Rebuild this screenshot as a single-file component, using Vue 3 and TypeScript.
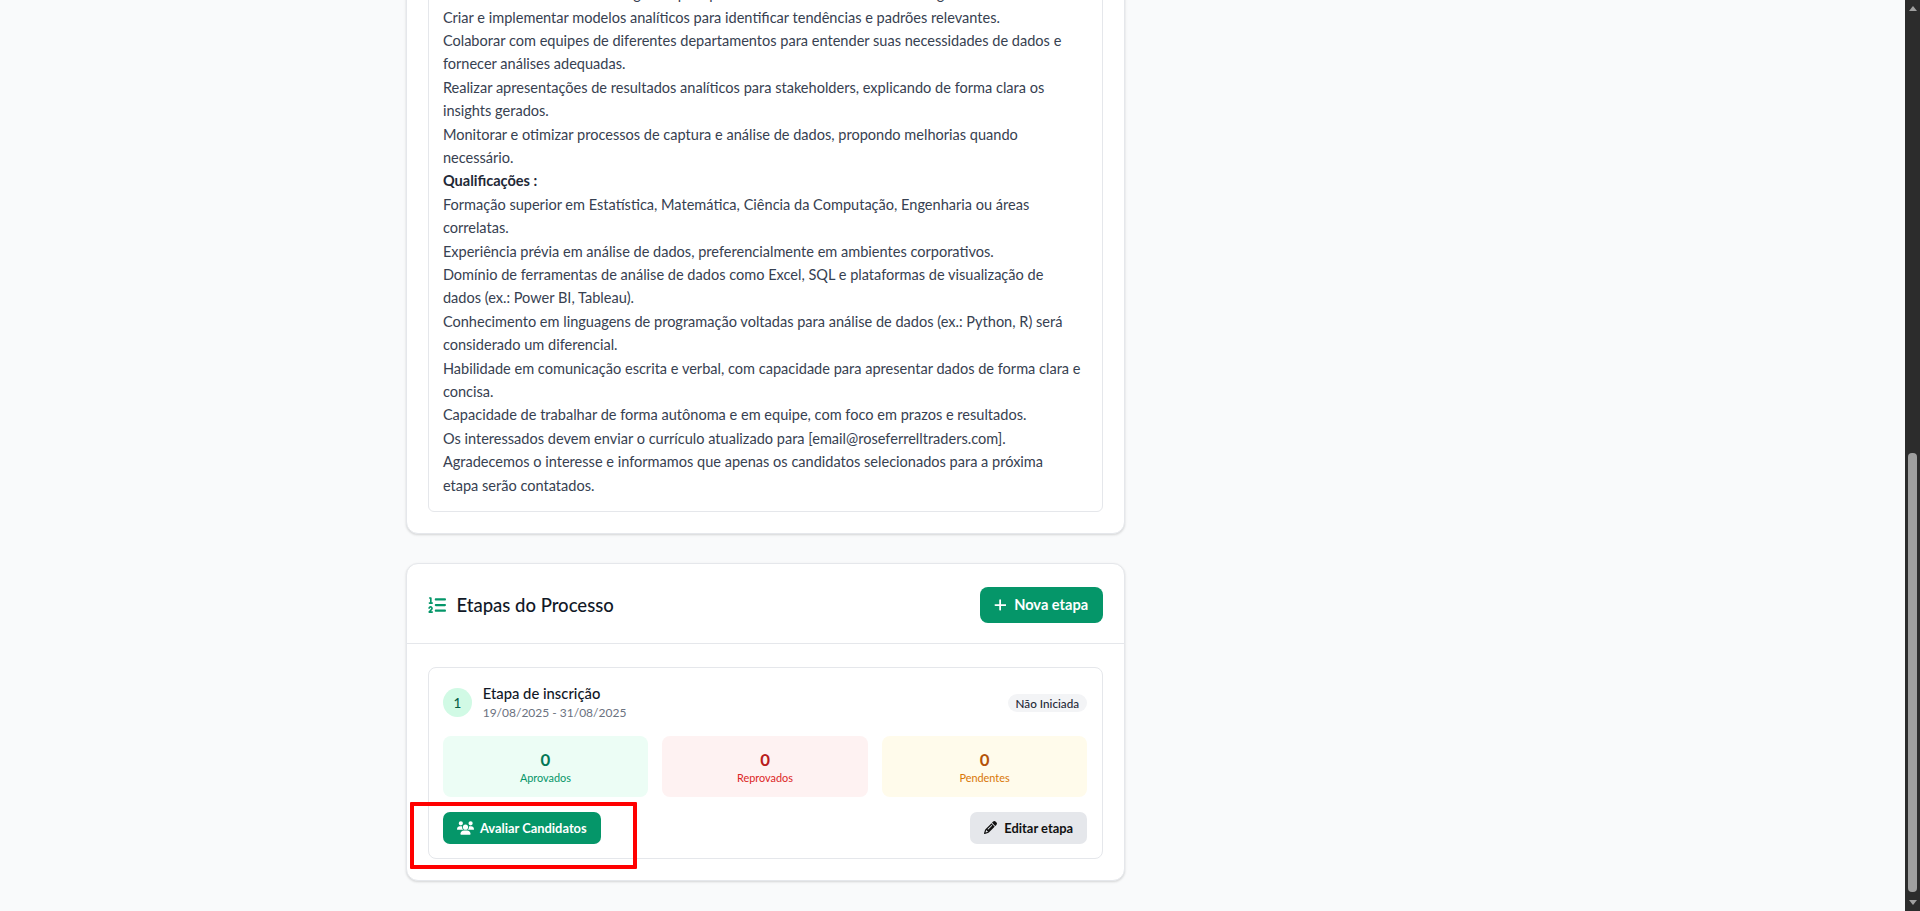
<script setup lang="ts">
interface Stat {
  value: number
  label: string
  kind: string
}

// \n keeps the two long lines breaking where the original does
const lines: { text: string; bold?: boolean }[] = [
  { text: 'Coletar e analisar dados de negócios para produzir relatórios e dashboards de gestão.' },
  { text: 'Criar e implementar modelos analíticos para identificar tendências e padrões relevantes.' },
  { text: 'Colaborar com equipes de diferentes departamentos para entender suas necessidades de dados e fornecer análises adequadas.' },
  { text: 'Realizar apresentações de resultados analíticos para stakeholders, explicando de forma clara os insights gerados.' },
  { text: 'Monitorar e otimizar processos de captura e análise de dados, propondo melhorias quando necessário.' },
  { text: 'Qualificações :', bold: true },
  { text: 'Formação superior em Estatística, Matemática, Ciência da Computação, Engenharia ou áreas correlatas.' },
  { text: 'Experiência prévia em análise de dados, preferencialmente em ambientes corporativos.' },
  { text: 'Domínio de ferramentas de análise de dados como Excel, SQL e plataformas de visualização de\ndados (ex.: Power BI, Tableau).' },
  { text: 'Conhecimento em linguagens de programação voltadas para análise de dados (ex.: Python, R) será considerado um diferencial.' },
  { text: 'Habilidade em comunicação escrita e verbal, com capacidade para apresentar dados de forma clara e concisa.' },
  { text: 'Capacidade de trabalhar de forma autônoma e em equipe, com foco em prazos e resultados.' },
  { text: 'Os interessados devem enviar o currículo atualizado para [email@roseferrelltraders.com].' },
  { text: 'Agradecemos o interesse e informamos que apenas os candidatos selecionados para a próxima\netapa serão contatados.' },
]

const stats: Stat[] = [
  { value: 0, label: 'Aprovados', kind: 'green' },
  { value: 0, label: 'Reprovados', kind: 'red' },
  { value: 0, label: 'Pendentes', kind: 'yellow' },
]
</script>

<template>
  <div class="page">
    <main class="content">
      <section class="card description-card">
        <div class="description">
          <div v-for="line in lines" :key="line.text" :class="{ bold: line.bold }">{{ line.text }}</div>
        </div>
      </section>

      <section class="card">
        <header class="card-header">
          <h2 class="card-title">
            <svg class="title-icon" viewBox="0 0 512 512" fill="currentColor">
              <path d="M24 56c0-13.3 10.7-24 24-24H80c13.3 0 24 10.7 24 24V176h16c13.3 0 24 10.7 24 24s-10.7 24-24 24H40c-13.3 0-24-10.7-24-24s10.7-24 24-24H56V80H48C34.7 80 24 69.3 24 56zM86.7 341.2c-6.5-7.4-18.3-6.9-24 1.2L51.5 357.9c-7.7 10.8-22.7 13.3-33.5 5.6s-13.3-22.7-5.6-33.5l11.1-15.6c23.7-33.2 72.3-35.6 99.2-4.9c21.3 24.4 20.8 60.9-1.1 84.7L86.8 432H120c13.3 0 24 10.7 24 24s-10.7 24-24 24H32c-9.5 0-18.2-5.6-22-14.4s-2.1-18.9 4.3-25.9l72-78c5.3-5.8 5.4-14.6 .3-20.5zM224 64H480c17.7 0 32 14.3 32 32s-14.3 32-32 32H224c-17.7 0-32-14.3-32-32s14.3-32 32-32zm0 160H480c17.7 0 32 14.3 32 32s-14.3 32-32 32H224c-17.7 0-32-14.3-32-32s14.3-32 32-32zm0 160H480c17.7 0 32 14.3 32 32s-14.3 32-32 32H224c-17.7 0-32-14.3-32-32s14.3-32 32-32z" />
            </svg>
            Etapas do Processo
          </h2>
          <button class="btn btn-new">
            <svg class="plus-icon" viewBox="0 0 448 512" fill="currentColor">
              <path d="M256 80c0-17.7-14.3-32-32-32s-32 14.3-32 32V224H48c-17.7 0-32 14.3-32 32s14.3 32 32 32H192V432c0 17.7 14.3 32 32 32s32-14.3 32-32V288H432c17.7 0 32-14.3 32-32s-14.3-32-32-32H256V80z" />
            </svg>
            Nova etapa
          </button>
        </header>

        <div class="card-body">
          <article class="stage">
            <div class="stage-top">
              <div class="stage-info">
                <span class="stage-number">1</span>
                <div class="stage-text">
                  <div class="stage-name">Etapa de inscrição</div>
                  <div class="stage-dates">19/08/2025 - 31/08/2025</div>
                </div>
              </div>
              <span class="badge">Não Iniciada</span>
            </div>

            <div class="stats">
              <div v-for="stat in stats" :key="stat.label" class="stat" :class="stat.kind">
                <div class="stat-value">{{ stat.value }}</div>
                <div class="stat-label">{{ stat.label }}</div>
              </div>
            </div>

            <div class="stage-actions">
              <button class="btn btn-evaluate">
                <svg class="users-icon" viewBox="0 0 640 512" fill="currentColor">
                  <path d="M144 0a80 80 0 1 1 0 160A80 80 0 1 1 144 0zM512 0a80 80 0 1 1 0 160A80 80 0 1 1 512 0zM0 298.7C0 239.8 47.8 192 106.7 192h42.7c15.9 0 31 3.5 44.6 9.7c-1.3 7.2-1.9 14.7-1.9 22.3c0 38.2 16.8 72.5 43.3 96c-.2 0-.4 0-.7 0H21.3C9.6 320 0 310.4 0 298.7zM405.3 320c-.2 0-.4 0-.7 0c26.6-23.5 43.3-57.8 43.3-96c0-7.6-.7-15-1.9-22.3c13.6-6.3 28.7-9.7 44.6-9.7h42.7C592.2 192 640 239.8 640 298.7c0 11.8-9.6 21.3-21.3 21.3H405.3zM224 224a96 96 0 1 1 192 0 96 96 0 1 1 -192 0zM128 485.3C128 411.7 187.7 352 261.3 352H378.7C452.3 352 512 411.7 512 485.3c0 14.7-11.9 26.7-26.7 26.7H154.7c-14.7 0-26.7-11.9-26.7-26.7z" />
                </svg>
                Avaliar Candidatos
              </button>
              <button class="btn btn-edit">
                <svg class="pencil-icon" viewBox="0 0 512 512" fill="currentColor">
                  <path d="M410.3 231l11.3-11.3-33.9-33.9-62.1-62.1L291.7 89.8l-11.3 11.3-22.6 22.6L58.6 322.9c-10.4 10.4-18 23.3-22.2 37.4L1 480.7c-2.5 8.4-.2 17.5 6.1 23.7s15.3 8.5 23.7 6.1l120.3-35.4c14.1-4.2 27-11.8 37.4-22.2L387.7 253.7 410.3 231zM160 399.4l-9.1 22.7c-4 3.1-8.5 5.4-13.3 6.9L59.4 452l23-78.1c1.4-4.9 3.8-9.4 6.9-13.3l22.7-9.1v32c0 8.8 7.2 16 16 16h32zM362.7 18.7L348.3 33.2 325.7 55.8 314.3 67.1l33.9 33.9 62.1 62.1 33.9 33.9 11.3-11.3 22.6-22.6 14.5-14.5c25-25 25-65.5 0-90.5L453.3 18.7c-25-25-65.5-25-90.5 0zm-47.4 168l-144 144c-6.2 6.2-16.4 6.2-22.6 0s-6.2-16.4 0-22.6l144-144c6.2-6.2 16.4-6.2 22.6 0s6.2 16.4 0 22.6z" />
                </svg>
                Editar etapa
              </button>
            </div>
          </article>
        </div>
      </section>
    </main>

    <aside class="scrollbar">
      <span class="arrow up"></span>
      <span class="scroll-space"></span>
      <span class="thumb"></span>
      <span class="arrow down"></span>
    </aside>

    <div class="highlight"></div>
  </div>
</template>

<style scoped>
.page {
  position: relative;
  display: flex;
  height: 911px;
  overflow: hidden;
  background: #f9fafb;
  font-family: Lato, "Noto Sans", sans-serif;
  color: #374151;
}

.content {
  flex: 1;
  display: flex;
  flex-direction: column;
  justify-content: flex-end;
  gap: 28.8px;
  padding: 0 0 30px 405.5px;
}

.card {
  width: 719px;
  flex-shrink: 0;
  box-sizing: border-box;
  background: #fff;
  border: 1px solid #e5e7eb;
  border-radius: 12px;
  box-shadow: 0 1px 3px rgba(0, 0, 0, 0.1), 0 1px 2px rgba(0, 0, 0, 0.06);
}

.description-card {
  padding: 21px;
}

.description {
  padding: 15.4px 14.4px 14.4px;
  border: 1px solid #e5e7eb;
  border-radius: 6px;
  font-size: 14.55px;
  line-height: 23.4px;
  white-space: pre-line;
}

.bold {
  font-weight: 700;
  color: #1f2937;
}

.card-header {
  display: flex;
  align-items: center;
  justify-content: space-between;
  height: 77px;
  padding: 2px 21px 0;
  border-bottom: 1px solid #e5e7eb;
}

.card-title {
  display: flex;
  align-items: center;
  gap: 11px;
  margin: 0;
  font-size: 18.5px;
  font-weight: 500;
  color: #111827;
}

.title-icon {
  width: 18px;
  height: 18px;
  color: #059669;
}

.btn {
  display: inline-flex;
  align-items: center;
  border: none;
  font-family: inherit;
  font-weight: 700;
  cursor: pointer;
}

.btn-new {
  gap: 8px;
  height: 36px;
  padding: 0 14.4px;
  border-radius: 8px;
  background: #059669;
  color: #fff;
  font-size: 14.6px;
}

.plus-icon {
  width: 12.25px;
  height: 14px;
}

.card-body {
  padding: 22.4px 21px 21px;
}

.stage {
  padding: 14.4px;
  border: 1px solid #e5e7eb;
  border-radius: 8px;
}

.stage-top {
  display: flex;
  align-items: center;
  justify-content: space-between;
}

.stage-info {
  display: flex;
  align-items: center;
  gap: 11px;
}

.stage-text {
  padding-top: 1px;
}

.stage-number {
  display: flex;
  align-items: center;
  justify-content: center;
  width: 28.8px;
  height: 28.8px;
  border-radius: 50%;
  background: #d1fae5;
  color: #065f46;
  font-size: 13.4px;
  font-weight: 500;
}

.stage-name {
  font-size: 14.8px;
  line-height: 20px;
  font-weight: 500;
  color: #111827;
}

.stage-dates {
  font-size: 12px;
  line-height: 20px;
  color: #6b7280;
}

.badge {
  padding: 0 8px;
  height: 18px;
  line-height: 18px;
  border-radius: 9px;
  background: #f3f4f6;
  color: #1f2937;
  font-size: 11.7px;
  font-weight: 500;
}

.stats {
  display: grid;
  grid-template-columns: repeat(3, 1fr);
  gap: 14.4px;
  margin-top: 12.6px;
}

.stat {
  height: 61px;
  box-sizing: border-box;
  padding-top: 14px;
  border-radius: 8px;
  text-align: center;
}

.stat-value {
  font-size: 16.8px;
  line-height: 20px;
  font-weight: 700;
}

.stat-label {
  font-size: 10.9px;
  line-height: 16px;
}

.green {
  background: #ecfdf5;
}

.green .stat-value {
  color: #047857;
}

.green .stat-label {
  color: #059669;
}

.red {
  background: #fef2f2;
}

.red .stat-value {
  color: #b91c1c;
}

.red .stat-label {
  color: #dc2626;
}

.yellow {
  background: #fffbeb;
}

.yellow .stat-value {
  color: #b45309;
}

.yellow .stat-label {
  color: #d97706;
}

.stage-actions {
  display: flex;
  justify-content: space-between;
  margin-top: 15px;
}

.btn-evaluate,
.btn-edit {
  height: 32px;
  padding: 0 14px;
  border-radius: 7px;
  font-size: 12.9px;
}

.btn-evaluate {
  gap: 6px;
  background: #059669;
  color: #fff;
}

.users-icon {
  width: 17px;
  height: 14px;
}

.btn-edit {
  gap: 7px;
  background: #e5e7eb;
  color: #111;
}

.pencil-icon {
  width: 13px;
  height: 13px;
}

.scrollbar {
  display: flex;
  flex-direction: column;
  align-items: center;
  flex: 0 0 15px;
  background: #2c2c2c;
}

.arrow {
  width: 0;
  height: 0;
  border-left: 4.5px solid transparent;
  border-right: 4.5px solid transparent;
}

.arrow.up {
  margin-top: 6px;
  border-bottom: 5px solid #a0a0a0;
}

.arrow.down {
  margin: 8px 0 6px;
  border-top: 5px solid #a0a0a0;
}

.scroll-space {
  flex: 1;
}

.thumb {
  width: 9px;
  height: 439px;
  border-radius: 4px;
  background: #9f9f9f;
}

/* red annotation box drawn over the screenshot */
.highlight {
  position: absolute;
  left: 410px;
  top: 802px;
  width: 219px;
  height: 59px;
  border: 4px solid #f00;
  border-radius: 1px;
}
</style>
